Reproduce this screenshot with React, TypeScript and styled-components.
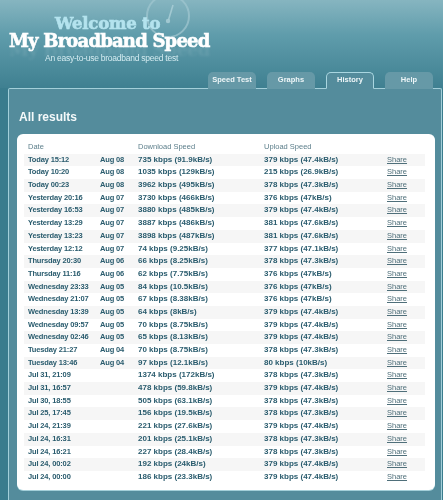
import React from 'react'
import styled, { createGlobalStyle } from 'styled-components'

const GlobalStyle = createGlobalStyle`
  html, body {
    margin: 0;
    padding: 0;
    background: #3a7c8d;
  }
  body {
    font-family: "Liberation Sans", Arial, sans-serif;
  }
`

const Page = styled.div`
  width: 443px;
  height: 500px;
  overflow: hidden;
  background: #3a7c8d;
  filter: blur(0.3px);
`

const Header = styled.header`
  height: 88px;
  position: relative;
  display: flex;
  flex-direction: column;
  align-items: flex-start;
  background: linear-gradient(180deg, #86b5c0 0%, #5f9cab 40%, #3f8091 100%);
`

const Gauge = styled.svg`
  position: absolute;
  left: 144px;
  top: -8px;
`

const Logo = styled.div`
  position: relative;
  margin: 16px 0 0 9px;
  width: 200px;
  font-family: "DejaVu Serif", serif;
  font-weight: 700;
`

const Welcome = styled.div`
  font-size: 16.5px;
  line-height: 16px;
  letter-spacing: -0.2px;
  color: #b4e3ee;
  padding-left: 46px;
  white-space: nowrap;
  -webkit-text-stroke: 0.6px #b4e3ee;
`

const BrandName = styled.div`
  font-size: 18px;
  line-height: 18px;
  letter-spacing: -0.8px;
  color: #fff;
  white-space: nowrap;
  -webkit-text-stroke: 0.6px #fff;
  text-shadow: 0 9px 3px rgba(255, 255, 255, 0.1);
`

const Tagline = styled.div`
  margin: 3px 0 0 36px;
  font-family: "Liberation Sans", Arial, sans-serif;
  font-size: 8.5px;
  line-height: 11px;
  letter-spacing: -0.25px;
  font-weight: 400;
  color: #d5ecf1;
  white-space: nowrap;
`

const Tabs = styled.nav`
  position: absolute;
  left: 208px;
  bottom: -1px;
  display: flex;
  gap: 11px;
`

const Tab = styled.a<{ $active?: boolean }>`
  width: 48px;
  height: 17px;
  box-sizing: border-box;
  padding-bottom: 3px;
  display: flex;
  align-items: center;
  justify-content: center;
  font-size: 7.5px;
  font-weight: 700;
  color: #eef6f8;
  border-radius: 5px 5px 0 0;
  background: ${p => (p.$active ? '#548c9c' : '#6699a7')};
  border: ${p => (p.$active ? '1px solid #a9d6e0' : 'none')};
  border-bottom: ${p => (p.$active ? '1px solid #548c9c' : 'none')};
  position: relative;
  z-index: 1;
`

const Panel = styled.main`
  height: 412px;
  box-sizing: border-box;
  margin: 0 1px 0 8px;
  padding: 0 6px 0 8px;
  background: #548c9c;
  border: 1px solid #a3cfd9;
  border-bottom: none;
  border-radius: 2px 2px 0 0;
`

const Title = styled.h1`
  margin: 0;
  height: 45px;
  box-sizing: border-box;
  padding: 20px 0 0 2px;
  font-size: 12px;
  line-height: 16px;
  font-weight: 700;
  color: #f4f9fa;
`

const Card = styled.section`
  height: 356px;
  box-sizing: border-box;
  padding: 7px 10px 0 7px;
  background: #fff;
  border-radius: 6px;
  box-shadow: 0 1px 0 #a3cfd9;
`

const Row = styled.div<{ $shaded?: boolean }>`
  height: 12.7px;
  display: grid;
  grid-template-columns: 72px 38px 126px 123px 1fr;
  align-items: center;
  padding-left: 4px;
  font-size: 8px;
  line-height: 12.7px;
  white-space: nowrap;
  color: #2a5c6e;
  background: ${p => (p.$shaded ? '#f6f6f6' : '#fff')};
`

const HeadRow = styled(Row)`
  color: #5d7f8b;
  font-size: 7.5px;
  font-weight: 400;
`

const DateCell = styled.span`
  font-size: 7.5px;
  letter-spacing: -0.15px;
  font-weight: 700;
`

const Speed = styled.span`
  font-weight: 700;
`

const ShareLink = styled.a`
  color: #4f6f7a;
  text-decoration: underline;
  font-size: 7.5px;
`

const results = [
  ['Today 15:12', 'Aug 08', '735 kbps (91.9kB/s)', '379 kbps (47.4kB/s)'],
  ['Today 10:20', 'Aug 08', '1035 kbps (129kB/s)', '215 kbps (26.9kB/s)'],
  ['Today 00:23', 'Aug 08', '3962 kbps (495kB/s)', '378 kbps (47.3kB/s)'],
  ['Yesterday 20:16', 'Aug 07', '3730 kbps (466kB/s)', '376 kbps (47kB/s)'],
  ['Yesterday 16:53', 'Aug 07', '3880 kbps (485kB/s)', '379 kbps (47.4kB/s)'],
  ['Yesterday 13:29', 'Aug 07', '3887 kbps (486kB/s)', '381 kbps (47.6kB/s)'],
  ['Yesterday 13:23', 'Aug 07', '3898 kbps (487kB/s)', '381 kbps (47.6kB/s)'],
  ['Yesterday 12:12', 'Aug 07', '74 kbps (9.25kB/s)', '377 kbps (47.1kB/s)'],
  ['Thursday 20:30', 'Aug 06', '66 kbps (8.25kB/s)', '378 kbps (47.3kB/s)'],
  ['Thursday 11:16', 'Aug 06', '62 kbps (7.75kB/s)', '376 kbps (47kB/s)'],
  ['Wednesday 23:33', 'Aug 05', '84 kbps (10.5kB/s)', '376 kbps (47kB/s)'],
  ['Wednesday 21:07', 'Aug 05', '67 kbps (8.38kB/s)', '376 kbps (47kB/s)'],
  ['Wednesday 13:39', 'Aug 05', '64 kbps (8kB/s)', '379 kbps (47.4kB/s)'],
  ['Wednesday 09:57', 'Aug 05', '70 kbps (8.75kB/s)', '379 kbps (47.4kB/s)'],
  ['Wednesday 02:46', 'Aug 05', '65 kbps (8.13kB/s)', '379 kbps (47.4kB/s)'],
  ['Tuesday 21:27', 'Aug 04', '70 kbps (8.75kB/s)', '378 kbps (47.3kB/s)'],
  ['Tuesday 13:46', 'Aug 04', '97 kbps (12.1kB/s)', '80 kbps (10kB/s)'],
  ['Jul 31, 21:09', '', '1374 kbps (172kB/s)', '378 kbps (47.3kB/s)'],
  ['Jul 31, 16:57', '', '478 kbps (59.8kB/s)', '379 kbps (47.4kB/s)'],
  ['Jul 30, 18:55', '', '505 kbps (63.1kB/s)', '378 kbps (47.3kB/s)'],
  ['Jul 25, 17:45', '', '156 kbps (19.5kB/s)', '378 kbps (47.3kB/s)'],
  ['Jul 24, 21:39', '', '221 kbps (27.6kB/s)', '379 kbps (47.4kB/s)'],
  ['Jul 24, 16:31', '', '201 kbps (25.1kB/s)', '378 kbps (47.3kB/s)'],
  ['Jul 24, 16:21', '', '227 kbps (28.4kB/s)', '378 kbps (47.3kB/s)'],
  ['Jul 24, 00:02', '', '192 kbps (24kB/s)', '379 kbps (47.4kB/s)'],
  ['Jul 24, 00:00', '', '186 kbps (23.3kB/s)', '379 kbps (47.4kB/s)'],
]

const tabs = ['Speed Test', 'Graphs', 'History', 'Help']

export default function App() {
  return (
    <Page>
      <GlobalStyle />
      <Header>
        <Gauge width="50" height="50" viewBox="0 0 50 50" fill="none">
          <circle cx="24" cy="24" r="21" stroke="#9fc6cf" strokeWidth="2" opacity="0.75" />
          <path d="M29 13 L24.5 28" stroke="#a9ced6" strokeWidth="1.6" opacity="0.85" />
          <circle cx="24" cy="29" r="2.2" fill="#a9ced6" opacity="0.85" />
        </Gauge>
        <Logo>
          <Welcome>Welcome to</Welcome>
          <BrandName>My Broadband Speed</BrandName>
          <Tagline>An easy-to-use broadband speed test</Tagline>
        </Logo>
        <Tabs>
          {tabs.map(t => (
            <Tab key={t} $active={t === 'History'}>{t}</Tab>
          ))}
        </Tabs>
      </Header>
      <Panel>
        <Title>All results</Title>
        <Card>
          <HeadRow>
            <span>Date</span>
            <span />
            <span>Download Speed</span>
            <span>Upload Speed</span>
            <span />
          </HeadRow>
          {results.map((r, i) => (
            <Row key={r[0]} $shaded={i % 2 === 0}>
              <DateCell>{r[0]}</DateCell>
              <DateCell>{r[1]}</DateCell>
              <Speed>{r[2]}</Speed>
              <Speed>{r[3]}</Speed>
              <ShareLink>Share</ShareLink>
            </Row>
          ))}
        </Card>
      </Panel>
    </Page>
  )
}
